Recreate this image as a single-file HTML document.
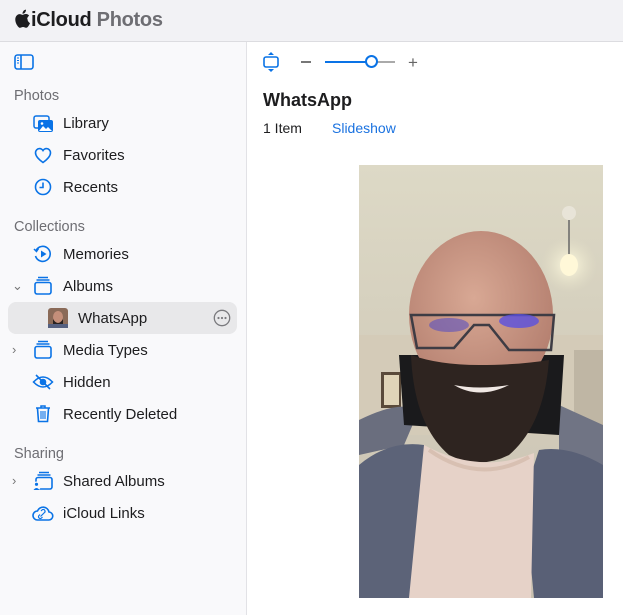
<!DOCTYPE html>
<html><head><meta charset="utf-8"><style>
*{margin:0;padding:0;box-sizing:border-box}
body{width:623px;height:615px;overflow:hidden;font-family:"Liberation Sans",Arial,sans-serif;background:#fff;position:relative}
.top{position:absolute;left:0;top:0;width:623px;height:42px;background:#f2f2f5;border-bottom:1px solid #dcdce0}
.logo{position:absolute;left:14px;top:9px;font-size:20px;font-weight:bold;color:#1d1d1f;letter-spacing:-0.3px}
.logo span{color:#6e6e73}
.side{position:absolute;left:0;top:42px;width:247px;height:573px;background:#f9f9fb;border-right:1px solid #e2e2e6}
.sec{position:absolute;left:14px;font-size:14.5px;color:#6e6e73;margin-top:1px}
.item{position:absolute;left:63px;font-size:15px;color:#1d1d1f;margin-top:1px}
.ic{position:absolute;left:33px}
.sel{position:absolute;left:8px;top:302px;width:229px;height:32px;background:#e8e8ea;border-radius:8px}
.chev{position:absolute;left:12px;font-size:13px;color:#777}
</style></head><body>
<div class="top"><div class="logo"><svg width="17" height="19" viewBox="0 0 17 20" style="vertical-align:-2px"><path d="M13.5 10.6c0-2.3 1.9-3.4 2-3.5-1.1-1.6-2.8-1.800-3.4-1.8-1.4-.1-2.8.9-3.5.9-.7 0-1.8-.8-3-.8C4 5.4 2.500 6.3 1.7 7.8 0 10.7 1.3 15 3 17.4c.8 1.2 1.7 2.5 3 2.4 1.2 0 1.6-.8 3.1-.8s1.8.8 3.1.8c1.3 0 2.1-1.2 2.9-2.4.9-1.3 1.3-2.6 1.3-2.7 0 0-2.5-1-2.6-4.1zM11.2 3.7c.6-.8 1.1-1.9 1-3-.9 0-2.1.6-2.7 1.4-.6.7-1.1 1.8-1 2.9 1 .1 2.1-.5 2.7-1.3z" fill="#1d1d1f"/></svg>iCloud <span>Photos</span></div></div>
<div class="side"></div>
<svg style="position:absolute;left:14px;top:54px" width="20" height="16"><rect x="1" y="1" width="18" height="14" rx="2.5" fill="none" stroke="#0a73e6" stroke-width="1.6"/><line x1="7" y1="1" x2="7" y2="15" stroke="#0a73e6" stroke-width="1.6"/><path d="M3 4h2M3 6.5h2M3 9h2" stroke="#0a73e6" stroke-width="1"/></svg>
<div class="sec" style="top:87px">Photos</div>
<svg class="ic" style="top:115px" width="21" height="18"><rect x="1" y="1" width="15" height="12" rx="2" fill="none" stroke="#0a73e6" stroke-width="1.5"/><rect x="5" y="5" width="15" height="12" rx="2" fill="#0a73e6"/><path d="M6 16l4-5 3 3 2-2 4 4z" fill="#fff"/><circle cx="9" cy="8.5" r="1.3" fill="#fff"/></svg>
<div class="item" style="top:114px">Library</div>
<svg class="ic" style="left:34px;top:147px" width="18" height="17"><path d="M9 15.5C4 12 1.5 9 1.5 5.8 1.5 3.4 3.3 1.6 5.5 1.6c1.5 0 2.7.8 3.5 2 .8-1.2 2-2 3.5-2 2.2 0 4 1.8 4 4.2C16.5 9 14 12 9 15.5z" fill="none" stroke="#0a73e6" stroke-width="1.6"/></svg>
<div class="item" style="top:146px">Favorites</div>
<svg class="ic" style="left:34px;top:178px" width="18" height="18"><circle cx="9" cy="9" r="7.5" fill="none" stroke="#0a73e6" stroke-width="1.6"/><path d="M9 4.5V9.5H5.5" fill="none" stroke="#0a73e6" stroke-width="1.6"/></svg>
<div class="item" style="top:178px">Recents</div>
<div class="sec" style="top:218px">Collections</div>
<svg class="ic" style="left:33px;top:244px" width="20" height="20"><path d="M3 6.5A7.5 7.5 0 1 1 2.5 12" fill="none" stroke="#0a73e6" stroke-width="1.6"/><path d="M1 5l2.5 2.5L5.5 4.5" fill="none" stroke="#0a73e6" stroke-width="1.5"/><path d="M8 6.5v7l5.5-3.5z" fill="#0a73e6"/></svg>
<div class="item" style="top:245px">Memories</div>
<div class="chev" style="top:278px">&#8964;</div>
<svg class="ic" style="left:34px;top:276px" width="18" height="19"><path d="M4 1.5h10M2.5 4h13" stroke="#0a73e6" stroke-width="1.4"/><rect x="1" y="6.5" width="16" height="11.5" rx="2" fill="none" stroke="#0a73e6" stroke-width="1.6"/></svg>
<div class="item" style="top:277px">Albums</div>
<div class="sel"></div>
<svg style="position:absolute;left:48px;top:308px" width="20" height="20"><rect width="20" height="20" rx="3" fill="#8a6a58"/><ellipse cx="10" cy="9" rx="5" ry="6" fill="#c48f7a"/><path d="M5 11q5 8 10 0v7H5z" fill="#2a2220"/><rect x="0" y="16" width="20" height="4" fill="#556080"/></svg>
<div class="item" style="left:78px;top:309px">WhatsApp</div>
<svg style="position:absolute;left:213px;top:309px" width="18" height="18"><circle cx="9" cy="9" r="7.7" fill="none" stroke="#7a7a7e" stroke-width="1.3"/><circle cx="5.5" cy="9" r="1.1" fill="#7a7a7e"/><circle cx="9" cy="9" r="1.1" fill="#7a7a7e"/><circle cx="12.5" cy="9" r="1.1" fill="#7a7a7e"/></svg>
<div class="chev" style="top:342px">&#8250;</div>
<svg class="ic" style="left:34px;top:340px" width="18" height="19"><path d="M4 1.5h10M2.5 4h13" stroke="#0a73e6" stroke-width="1.4"/><rect x="1" y="6.5" width="16" height="11.5" rx="2" fill="none" stroke="#0a73e6" stroke-width="1.6"/></svg>
<div class="item" style="top:341px">Media Types</div>
<svg class="ic" style="left:32px;top:374px" width="22" height="16"><path d="M1.5 8Q11-2 20.5 8Q11 18 1.5 8z" fill="none" stroke="#0a73e6" stroke-width="1.6"/><circle cx="11" cy="8" r="3.3" fill="#0a73e6"/><line x1="4" y1="1" x2="18" y2="15" stroke="#0a73e6" stroke-width="1.6"/></svg>
<div class="item" style="top:373px">Hidden</div>
<svg class="ic" style="left:35px;top:404px" width="16" height="19"><path d="M1 4h14M6 4V2h4v2" fill="none" stroke="#0a73e6" stroke-width="1.5"/><path d="M2.5 4.5l1 13h9l1-13" fill="none" stroke="#0a73e6" stroke-width="1.6"/><path d="M6 7v8M8 7v8M10 7v8" stroke="#0a73e6" stroke-width="1.1"/></svg>
<div class="item" style="top:405px">Recently Deleted</div>
<div class="sec" style="top:445px">Sharing</div>
<div class="chev" style="top:473px">&#8250;</div>
<svg class="ic" style="left:32px;top:471px" width="21" height="20"><path d="M7 1.5h10M5.5 4h13" stroke="#0a73e6" stroke-width="1.4"/><rect x="4" y="6.5" width="16" height="11.5" rx="2" fill="none" stroke="#0a73e6" stroke-width="1.6"/><circle cx="4.5" cy="15" r="4.5" fill="#f9f9fb"/><circle cx="4.5" cy="13.3" r="1.6" fill="#0a73e6"/><path d="M1.5 19q3-4 6 0z" fill="#0a73e6"/></svg>
<div class="item" style="top:472px">Shared Albums</div>
<svg class="ic" style="left:32px;top:505px" width="22" height="16"><path d="M5.5 15h11a4 4 0 0 0 .5-8A6 6 0 0 0 5.5 6 4.5 4.5 0 0 0 5.5 15z" fill="none" stroke="#0a73e6" stroke-width="1.6"/><path d="M8.5 11.5l5-5M8 9.5l-1 1a1.5 1.5 0 0 0 2.5 2.5l1-1M11.5 8.5l1-1a1.5 1.5 0 0 0-2.5-2.5l-1 1" fill="none" stroke="#0a73e6" stroke-width="1.2"/></svg>
<div class="item" style="top:504px">iCloud Links</div>

<svg style="position:absolute;left:263px;top:52px" width="16" height="20"><path d="M8 0l3 3H5z M8 20l3-3H5z" fill="#0a73e6"/><rect x="1" y="5" width="14" height="10" rx="2" fill="none" stroke="#0a73e6" stroke-width="1.6"/></svg>
<div style="position:absolute;left:301px;top:61px;width:10px;height:1.5px;background:#777"></div>
<div style="position:absolute;left:325px;top:61px;width:47px;height:2px;background:#0a73e6"></div>
<div style="position:absolute;left:372px;top:61px;width:23px;height:1.5px;background:#aaa"></div>
<div style="position:absolute;left:365px;top:55px;width:13px;height:13px;border-radius:50%;background:#fff;border:2px solid #0a73e6"></div>
<div style="position:absolute;left:408px;top:53px;font-size:17px;color:#666">+</div>
<div style="position:absolute;left:263px;top:90px;font-size:18px;font-weight:bold;color:#1d1d1f">WhatsApp</div>
<div style="position:absolute;left:263px;top:120px;font-size:14px;color:#1d1d1f">1 Item</div>
<div style="position:absolute;left:332px;top:120px;font-size:14px;color:#1a72e0">Slideshow</div>

<svg style="position:absolute;left:359px;top:165px" width="244" height="433" viewBox="0 0 244 433">
<defs><linearGradient id="w" x1="0" y1="0" x2="0" y2="1"><stop offset="0" stop-color="#ddd9c6"/><stop offset="1" stop-color="#c8c0b0"/></linearGradient>
<radialGradient id="l" cx="0.5" cy="0.5" r="0.5"><stop offset="0" stop-color="#fffbe0"/><stop offset="1" stop-color="#e6e2c8" stop-opacity="0"/></radialGradient>
<radialGradient id="s" cx="0.45" cy="0.4" r="0.6"><stop offset="0" stop-color="#d8a894"/><stop offset="1" stop-color="#b58070"/></radialGradient></defs>
<rect width="244" height="433" fill="url(#w)"/>
<rect x="0" y="170" width="244" height="100" fill="#d4cbb8"/>
<rect x="215" y="185" width="29" height="110" fill="#bfb6a4"/>
<circle cx="210" cy="100" r="28" fill="url(#l)"/>
<line x1="210" y1="55" x2="210" y2="90" stroke="#666" stroke-width="1.5"/><circle cx="210" cy="48" r="7" fill="#e8e4d8"/><ellipse cx="210" cy="100" rx="9" ry="11" fill="#fff8d8"/>
<rect x="22" y="207" width="20" height="36" fill="#5a4a3a"/><rect x="25" y="210" width="15" height="30" fill="#e0d4b8"/>
<path d="M0 255 Q40 235 60 245 L45 280 L0 290z" fill="#6a6e7e"/>
<path d="M244 260 L244 320 L200 300 L200 240z" fill="#707484"/>
<path d="M40 190 L45 260 L200 270 L205 190z" fill="#1a1a1c"/>
<ellipse cx="122" cy="150" rx="72" ry="84" fill="url(#s)"/>
<path d="M52 190 Q55 260 90 290 Q120 305 150 290 Q185 260 190 195 Q160 200 120 200 Q80 200 52 190z" fill="#2e2420"/>
<path d="M95 220 Q120 235 150 220 Q120 225 95 220z" fill="#f0e8e4"/>
<path d="M52 150 L195 150 L192 185 L150 185 L130 160 L115 160 L95 183 L58 183z" fill="none" stroke="#3e3c44" stroke-width="2.5"/>
<ellipse cx="90" cy="160" rx="20" ry="7" fill="#5a50c0" opacity="0.6"/><ellipse cx="160" cy="156" rx="20" ry="7" fill="#5a50e0" opacity="0.8"/>
<path d="M0 300 Q30 275 65 280 L80 320 L60 433 L0 433z" fill="#5c6378"/>
<path d="M244 300 Q210 280 180 285 L165 330 L175 433 L244 433z" fill="#596076"/>
<path d="M65 280 Q120 310 175 288 L172 433 L50 433z" fill="#e6d2c8"/>
<path d="M70 285 Q120 320 170 292" fill="none" stroke="#d8c0b2" stroke-width="4"/>
</svg>
</body></html>
